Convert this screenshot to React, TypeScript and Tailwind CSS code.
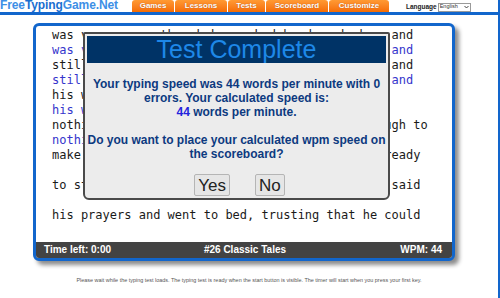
import React from "react";

const lines: { t: string; typed?: boolean }[] = [
  { t: "was very poor, though he worked hard each day, and" },
  { t: "was very poor, though he worked hard each day, and", typed: true },
  { t: "still he could never earn enough to live upon, and" },
  { t: "still he could never earn enough to live upon, and", typed: true },
  { t: "his wife and he grew poorer, till they had" },
  { t: "his wife and he grew poorer, till they had", typed: true },
  { t: "nothing left in the world but leather just enough to" },
  { t: "nothing left in", typed: true },
  { t: "make one pair of shoes. In the evening he got ready" },
  { t: "" },
  { t: "to start work on them in the morning. Later he said" },
  { t: "" },
  { t: "his prayers and went to bed, trusting that he could" },
];

const tabs = [
  { label: "Games", w: "w-[42px]" },
  { label: "Lessons", w: "w-[52px]" },
  { label: "Tests", w: "w-[37px]" },
  { label: "Scoreboard", w: "w-[62px]" },
  { label: "Customize", w: "w-[60px]" },
];

export default function App() {
  return (
    <div className="w-[500px] h-[298px] bg-white overflow-hidden border-r-2 border-[#1266cc] font-['Liberation_Sans',Arial,sans-serif]">
      {/* header */}
      <div className="flex h-[12px] items-start">
        <div className="w-[132px] h-[12px] flex items-start">
          <span className="text-[12px] leading-[11px] font-bold whitespace-nowrap tracking-[-0.1px]">
            <span className="text-[#3d8fe6]">Free</span>
            <span className="text-[#1a6fd0]">Typing</span>
            <span className="text-[#3d8fe6]">Game.Net</span>
            <sup className="text-[5px] text-[#3d8fe6] align-top ml-[1px]">™</sup>
          </span>
        </div>
        <div className="flex gap-[1px] h-[12px]">
          {tabs.map((tb) => (
            <div
              key={tb.label}
              className={`${tb.w} h-[12px] rounded-t-[3px] bg-gradient-to-b from-[#ff9a33] to-[#f56c00] flex items-center justify-center text-white text-[8px] font-bold leading-none [text-shadow:0_0_1px_rgba(120,40,0,0.6)]`}
            >
              {tb.label}
            </div>
          ))}
        </div>
        <div className="ml-[17px] flex items-center h-[12px] pt-[2px]">
          <span className="text-[6.5px] font-bold text-[#222] leading-none">Language</span>
          <div className="ml-[1px] w-[33px] h-[9px] border border-[#9a9a9a] bg-white flex items-center justify-between px-[1px]">
            <span className="text-[5.5px] leading-none text-[#333]">English</span>
            <svg width="5" height="4" viewBox="0 0 5 4">
              <path d="M0.5 1 L2.5 3 L4.5 1" stroke="#333" strokeWidth="0.9" fill="none" />
            </svg>
          </div>
        </div>
      </div>
      <div className="h-[3px] bg-[#1266cc]" />

      {/* main box */}
      <div className="mt-[8px] ml-[33px] w-[422px] h-[238px] border-[3px] border-[#1266cc] rounded-[6px] bg-white shadow-[4px_4px_4px_rgba(0,0,0,0.45)] relative flex flex-col overflow-hidden">
        <div className="flex-1 pl-[16px] pt-[2px] font-['DejaVu_Sans_Mono',monospace] text-[12px] leading-[15px]">
          {lines.map((l, i) => (
            <div
              key={i}
              className={`h-[15px] whitespace-pre ${l.typed ? "text-[#3535cc]" : "text-[#1a1a1a]"}`}
            >
              {l.t}
            </div>
          ))}
        </div>
        <div className="h-[16px] bg-[#434343] grid grid-cols-[1fr_auto_1fr] items-center px-[8px] text-white text-[10px] font-bold leading-none">
          <span>Time left: 0:00</span>
          <span className="ml-[2px]">#26 Classic Tales</span>
          <span className="text-right pr-[2px]">WPM: 44</span>
        </div>

        {/* dialog */}
        <div className="absolute left-[47px] top-[6px] w-[307px] h-[168px] bg-[#ececec] border-2 border-[#4a4a4a] rounded-t-[2px] rounded-b-[6px] p-[2px] flex flex-col">
          <div className="h-[27px] bg-[#003366] flex items-center justify-center">
            <span className="text-[25px] leading-none text-[#1e88e8]">Test Complete</span>
          </div>
          <div className="pt-[14px] text-center text-[12px] leading-[14px] font-bold text-[#0d3a80] whitespace-nowrap">
            Your typing speed was 44 words per minute with 0
            <br />
            errors. Your calculated speed is:
            <br />
            <span className="text-[#2222dd]">44</span> words per minute.
            <br />
            <br />
            Do you want to place your calculated wpm speed on
            <br />
            the scoreboard?
          </div>
          <div className="mt-[13px] flex justify-center gap-[25px] pl-[6px]">
            <div className="h-[22px] px-[3px] bg-[#e6e6e6] border border-[#b5b5b5] rounded-[2px] flex items-center text-[17px] leading-none text-[#222]">
              Yes
            </div>
            <div className="h-[22px] px-[3px] bg-[#e6e6e6] border border-[#b5b5b5] rounded-[2px] flex items-center text-[17px] leading-none text-[#222]">
              No
            </div>
          </div>
        </div>
      </div>

      {/* footer */}
      <div className="mt-[14px] h-[10px] text-center text-[5.45px] leading-[10px] text-[#555] whitespace-nowrap">
        Please wait while the typing test loads. The typing test is ready when the start button is visible. The timer will start when you press your first key.
      </div>
    </div>
  );
}
